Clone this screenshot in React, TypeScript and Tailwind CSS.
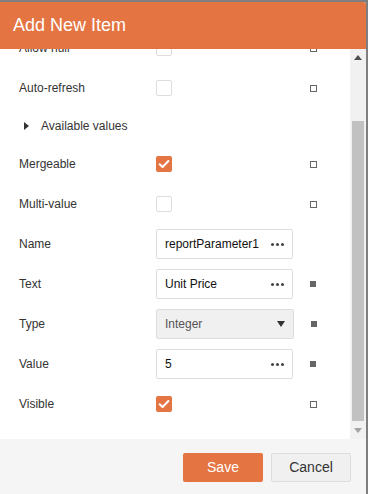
import React from "react";

const ORANGE = "bg-[#e57443]";

function Marker({ filled }: { filled?: boolean }) {
  return filled ? (
    <div className="ml-[17px] w-[6px] h-[6px] bg-[#666666]" />
  ) : (
    <div className="ml-[17px] w-[7px] h-[7px] border border-[#666666] bg-white" />
  );
}

function Checkbox({ checked }: { checked?: boolean }) {
  return (
    <div className="w-[137px] flex items-center">
      {checked ? (
        <div className="w-[16px] h-[16px] rounded-[2px] bg-[#e57443] flex items-center justify-center">
          <svg width="16" height="16" viewBox="0 0 16 16">
            <path d="M3.6 8.2 L6.6 11 L12.4 5" fill="none" stroke="white" strokeWidth="2" strokeLinecap="round" strokeLinejoin="round" />
          </svg>
        </div>
      ) : (
        <div className="w-[16px] h-[16px] rounded-[2px] border border-[#dddddd] bg-white" />
      )}
    </div>
  );
}

function Dots() {
  return (
    <div className="flex items-center gap-[2px]">
      <div className="w-[3px] h-[3px] rounded-full bg-[#444444]" />
      <div className="w-[3px] h-[3px] rounded-full bg-[#444444]" />
      <div className="w-[3px] h-[3px] rounded-full bg-[#444444]" />
    </div>
  );
}

function TextBox({ value }: { value: string }) {
  return (
    <div className="w-[137px] h-[30px] border border-[#dddddd] rounded-[2px] bg-white flex items-center pl-[8px] pr-[8px] justify-between">
      <span className="text-[12px] text-[#111111]">{value}</span>
      <Dots />
    </div>
  );
}

function Row({ label, children, marker }: { label: string; children: React.ReactNode; marker?: "hollow" | "filled" }) {
  return (
    <div className="h-[40px] flex items-center pl-[19px]">
      <div className="w-[137px] text-[12px] text-[#333333]">{label}</div>
      {children}
      {marker === "hollow" && <Marker />}
      {marker === "filled" && <Marker filled />}
    </div>
  );
}

export default function App() {
  return (
    <div
      className="w-[368px] h-[494px] bg-[#7f7f7f] pt-[2px] pr-[2px] flex flex-col overflow-hidden"
      style={{ fontFamily: '"Liberation Sans", Arial, sans-serif' }}
    >
      <div className="flex-1 flex flex-col bg-white rounded-tr-[3px] overflow-hidden">
        <div className={`h-[47px] shrink-0 ${ORANGE} flex items-center pl-[13px] text-[18px] text-white`}>
          Add New Item
        </div>
        <div className="h-[390px] shrink-0 flex">
          <div className="flex-1 overflow-hidden">
            <div className="-mt-[21px]">
              <Row label="Allow null" marker="hollow">
                <Checkbox />
              </Row>
              <Row label="Auto-refresh" marker="hollow">
                <Checkbox />
              </Row>
              <div className="h-[36px] flex items-center pl-[24px]">
                <svg width="6" height="8" viewBox="0 0 6 8">
                  <path d="M0 0 L5 4 L0 8 Z" fill="#333333" />
                </svg>
                <span className="ml-[11px] text-[12px] text-[#333333]">Available values</span>
              </div>
              <Row label="Mergeable" marker="hollow">
                <Checkbox checked />
              </Row>
              <Row label="Multi-value" marker="hollow">
                <Checkbox />
              </Row>
              <Row label="Name">
                <TextBox value="reportParameter1" />
              </Row>
              <Row label="Text" marker="filled">
                <TextBox value="Unit Price" />
              </Row>
              <Row label="Type" marker="filled">
                <div className="w-[138px] h-[30px] border border-[#dddddd] rounded-[2px] bg-[#f0f0f0] flex items-center pl-[8px] pr-[8px] justify-between">
                  <span className="text-[12px] text-[#555555]">Integer</span>
                  <svg width="8" height="6" viewBox="0 0 8 6">
                    <path d="M0 0 L8 0 L4 6 Z" fill="#333333" />
                  </svg>
                </div>
              </Row>
              <Row label="Value" marker="filled">
                <TextBox value="5" />
              </Row>
              <Row label="Visible" marker="hollow">
                <Checkbox checked />
              </Row>
            </div>
          </div>
          <div className="w-[16px] bg-[#f1f1f1] flex flex-col items-center">
            <div className="h-[17px] w-full flex items-center justify-center">
              <svg width="8" height="5" viewBox="0 0 8 5">
                <path d="M0 5 L4 0 L8 5 Z" fill="#505050" />
              </svg>
            </div>
            <div className="h-[55px]" />
            <div className="w-[12px] h-[300px] bg-[#c1c1c1]" />
            <div className="h-[1px]" />
            <div className="h-[17px] w-full flex items-center justify-center">
              <svg width="8" height="5" viewBox="0 0 8 5">
                <path d="M0 0 L8 0 L4 5 Z" fill="#a3a3a3" />
              </svg>
            </div>
          </div>
        </div>
        <div className="flex-1 bg-[#f5f5f5] flex justify-end items-start pt-[14px] pr-[15px] gap-[8px]">
          <button className={`w-[80px] h-[29px] ${ORANGE} rounded-[2px] text-white text-[14px]`}>Save</button>
          <button className="w-[80px] h-[29px] bg-[#f0f0f0] border border-[#dddddd] rounded-[2px] text-[#333333] text-[14px]">
            Cancel
          </button>
        </div>
      </div>
    </div>
  );
}
